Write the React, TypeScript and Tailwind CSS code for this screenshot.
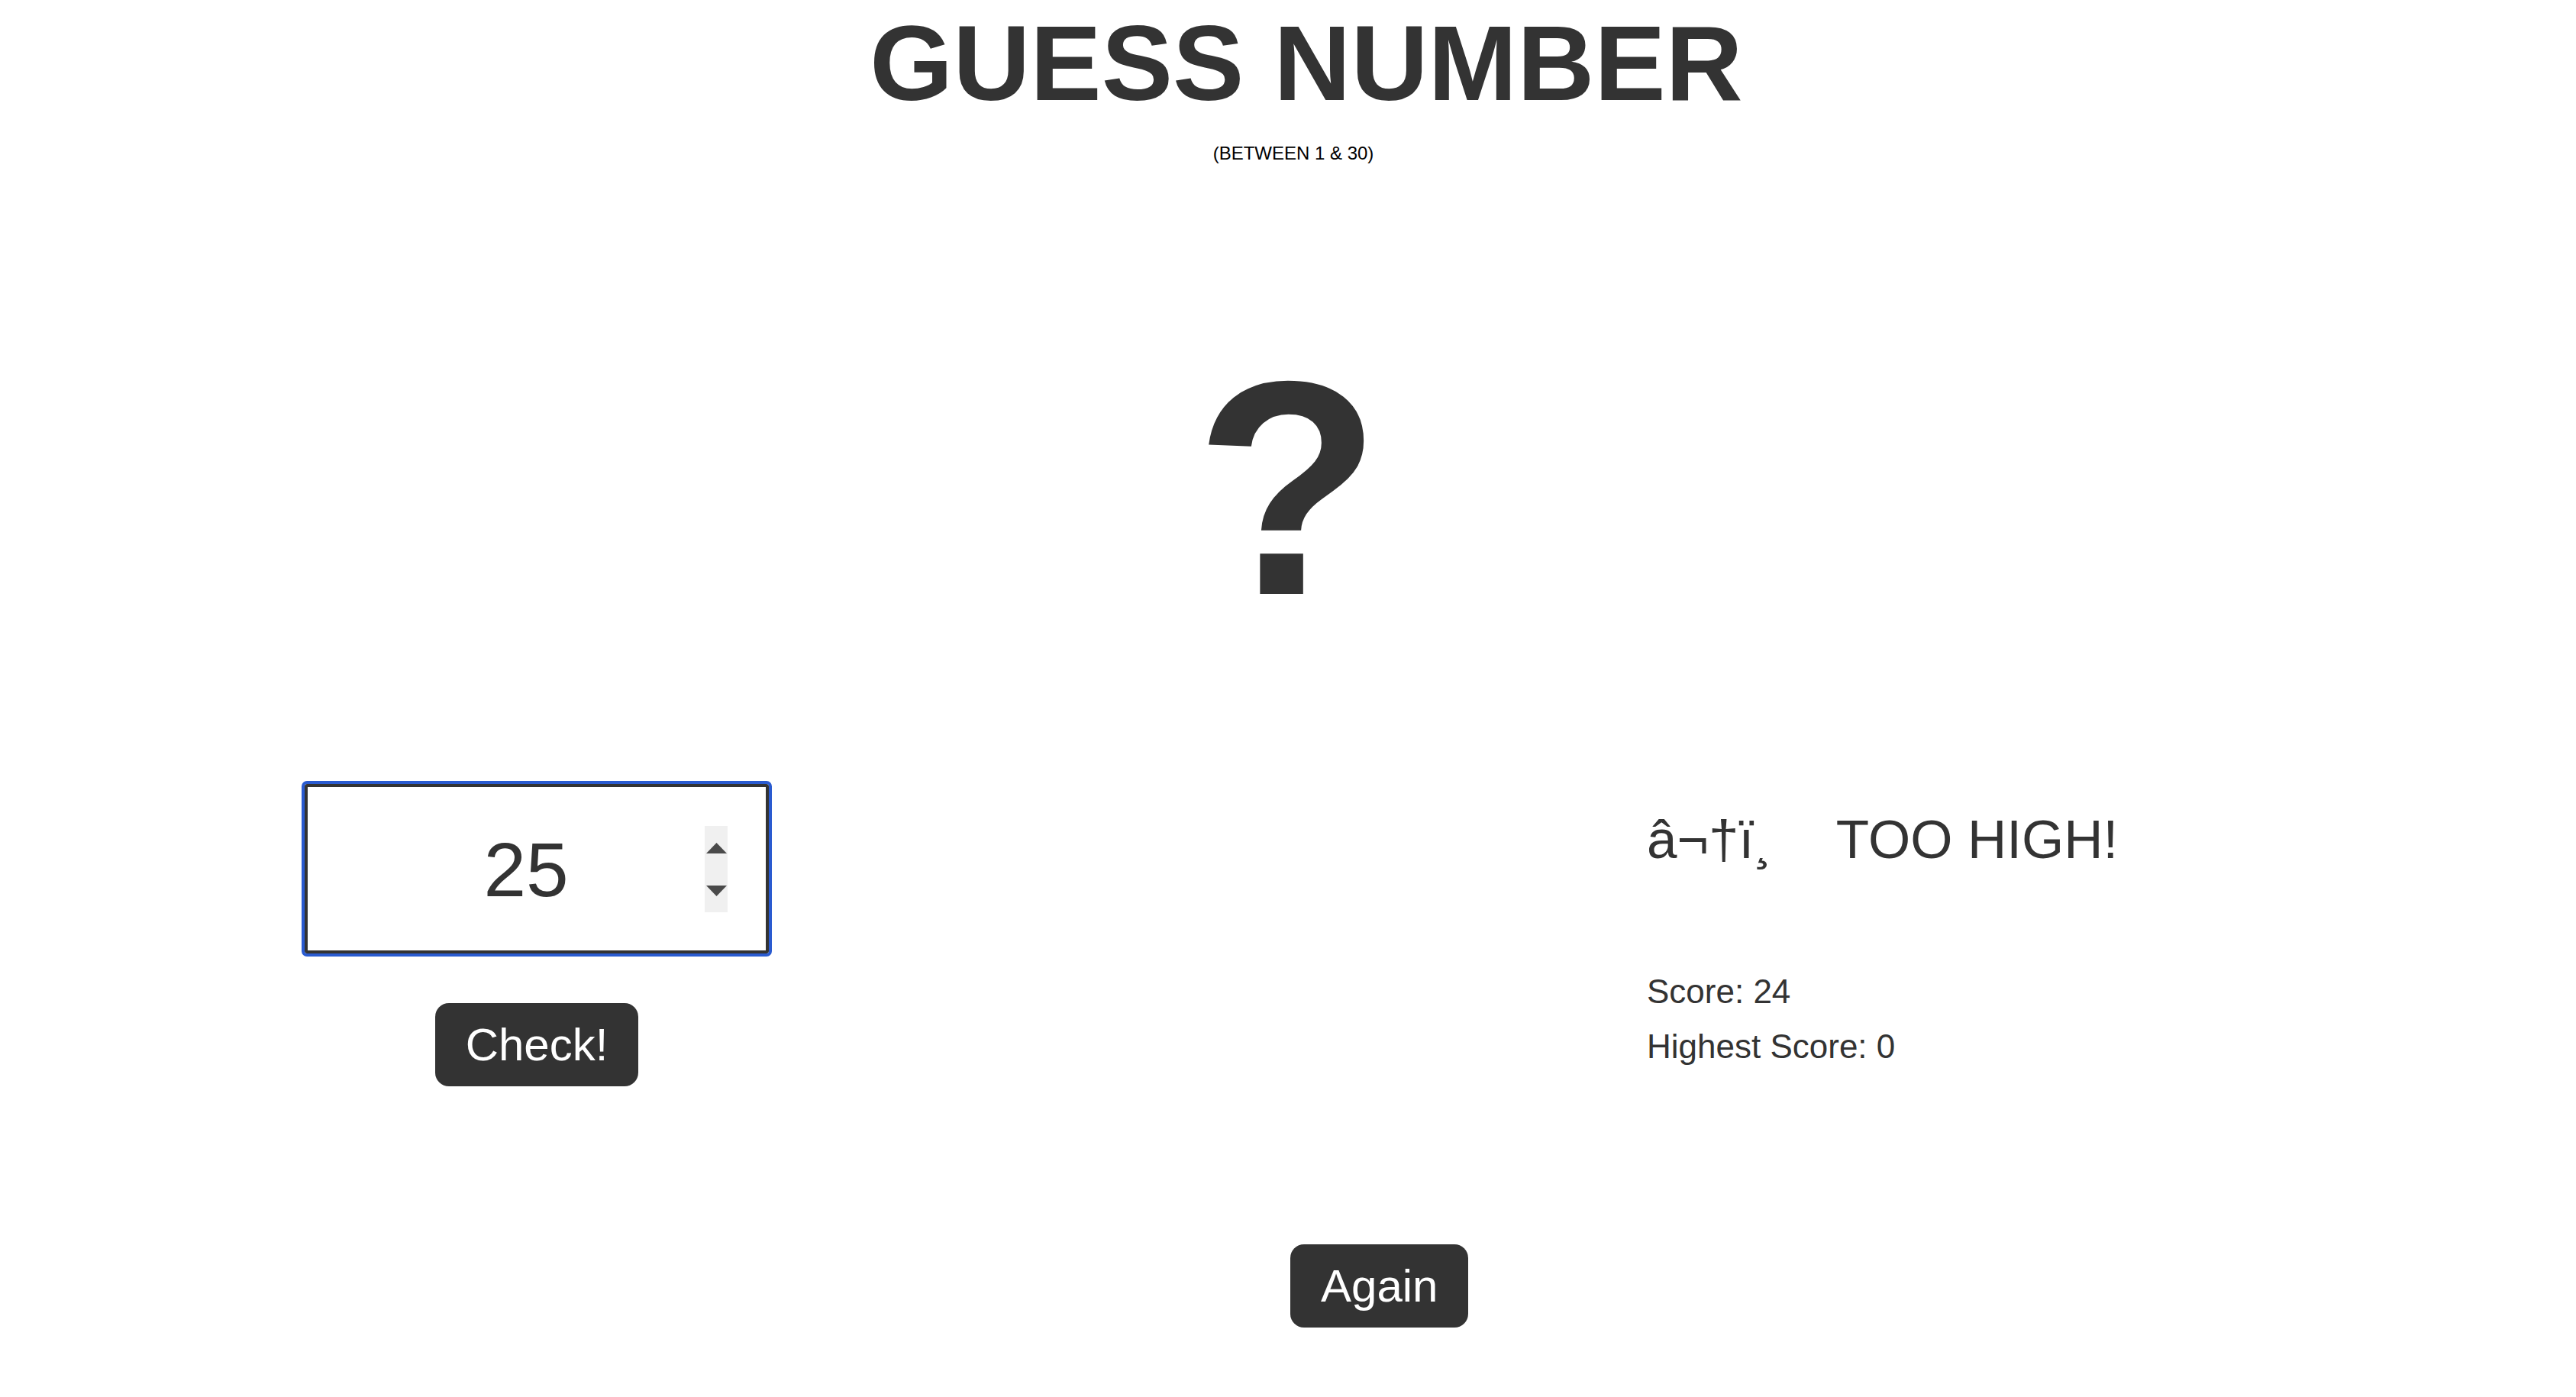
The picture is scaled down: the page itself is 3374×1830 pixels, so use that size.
import React from "react";

function Spinner() {
  return (
    <div className="flex h-[113px] w-[30px] shrink-0 flex-col items-center justify-between bg-[#f0f0f0] pb-[21px] pt-[22px]">
      <svg width="27" height="14" viewBox="0 0 27 14">
        <polygon points="13.5,0 27,14 0,14" fill="#4a4a4a" />
      </svg>
      <svg width="27" height="14" viewBox="0 0 27 14">
        <polygon points="0,0 27,0 13.5,14" fill="#4a4a4a" />
      </svg>
    </div>
  );
}

export default function App() {
  return (
    <div className="min-h-screen bg-white text-[#333] font-['Liberation_Sans',Arial,Helvetica,sans-serif]">
      <header className="flex flex-col items-center">
        <h1 className="mt-[13px] pl-[48px] text-[140px] font-bold leading-[140px]">GUESS NUMBER</h1>
        <p className="mt-[36px] pl-[14px] text-[24px] leading-[24px] text-black">(BETWEEN 1 &amp; 30)</p>
        <div className="mt-[227px] text-[400px] font-bold leading-[400px]">?</div>
      </header>

      <main className="flex items-start pl-[399px]">
        <section className="mt-[187px] flex w-[608px] flex-col items-center">
          <div className="flex h-[222px] w-[608px] items-center rounded-[3px] border-4 border-[#333] pl-[52px] pr-[50px] outline-4 outline-[#2a5bd0]">
            <input
              type="text"
              readOnly
              value="25"
              className="min-w-0 flex-1 bg-transparent pt-[2px] text-center text-[100px] leading-[100px] text-[#333] outline-none"
            />
            <Spinner />
          </div>
          <button className="mt-[65px] rounded-[18px] bg-[#333] px-[40px] py-[20px] text-[60px] leading-[69px] text-white">
            Check!
          </button>
        </section>

        <section className="ml-[1150px] flex flex-col">
          <p className="mt-[224px] whitespace-nowrap text-[71px] leading-[72px]">
            â¬†ï¸<span className="ml-[84px]">TOO HIGH!</span>
          </p>
          <p className="mt-[141px] text-[44px] leading-[44px]">Score: 24</p>
          <p className="mt-[28px] text-[44px] leading-[44px]">Highest Score: 0</p>
        </section>
      </main>

      <div className="mt-[207px] pb-[80px]">
        <button className="ml-[calc(50%+3px)] rounded-[18px] bg-[#333] px-[40px] py-[20px] text-[60px] leading-[69px] text-white">
          Again
        </button>
      </div>
    </div>
  );
}
